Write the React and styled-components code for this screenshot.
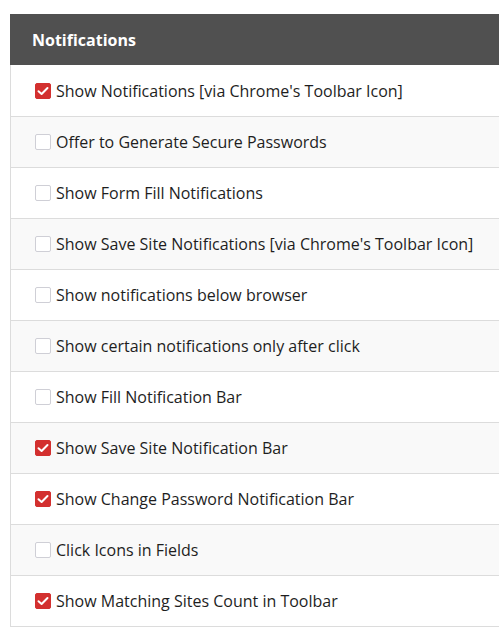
import React from 'react';
import styled, { createGlobalStyle } from 'styled-components';

const GlobalStyle = createGlobalStyle`
  html, body {
    margin: 0;
    padding: 0;
    background: #fff;
  }
  body {
    font-family: "Open Sans", "Liberation Sans", sans-serif;
  }
`

// the panel runs on to the right edge of the window, so there is no right border
const Page = styled.div`
  padding: 14px 0 0 10px;
`

const Panel = styled.section`
  border-left: 1px solid #dcdcdc;
  border-bottom: 1px solid #dcdcdc;
`

const Header = styled.header`
  height: 51px;
  margin-left: -1px;
  background: #505050;
  color: #fff;
  font-size: 16px;
  font-weight: 700;
  display: flex;
  align-items: center;
  padding-left: 22px;
`

const Row = styled.label`
  display: flex;
  align-items: center;
  height: 50px;
  padding-left: 24px;
  border-top: 1px solid #dcdcdc;
  background: ${p => (p.$striped ? '#f9f9f9' : '#fff')};
  font-size: 16px;
  color: #1e1e1e;
  white-space: nowrap;
  cursor: pointer;

  &:first-of-type {
    border-top: none;
    height: 51px;
  }
`

const Box = styled.span`
  flex: 0 0 auto;
  box-sizing: border-box;
  width: 16px;
  height: 16px;
  margin-right: 5px;
  border-radius: 2px;
  display: flex;
  align-items: center;
  justify-content: center;
  background: ${p => (p.$checked ? '#d3302f' : '#fff')};
  border: 1px solid ${p => (p.$checked ? '#d3302f' : '#cfcfd6')};
`

const items = [
  { label: "Show Notifications [via Chrome's Toolbar Icon]", checked: true },
  { label: 'Offer to Generate Secure Passwords', checked: false },
  { label: 'Show Form Fill Notifications', checked: false },
  { label: "Show Save Site Notifications [via Chrome's Toolbar Icon]", checked: false },
  { label: 'Show notifications below browser', checked: false },
  { label: 'Show certain notifications only after click', checked: false },
  { label: 'Show Fill Notification Bar', checked: false },
  { label: 'Show Save Site Notification Bar', checked: true },
  { label: 'Show Change Password Notification Bar', checked: true },
  { label: 'Click Icons in Fields', checked: false },
  { label: 'Show Matching Sites Count in Toolbar', checked: true },
]

function Check({ checked }) {
  return (
    <Box $checked={checked}>
      {checked && (
        <svg width="12" height="10" viewBox="0 0 12 10">
          <path d="M1.5 5.2 L4.6 8 L10.5 2" fill="none" stroke="#fff" strokeWidth="2" strokeLinecap="round" strokeLinejoin="round" />
        </svg>
      )}
    </Box>
  )
}

export default function App() {
  return (
    <Page>
      <GlobalStyle />
      <Panel>
        <Header>Notifications</Header>
        {items.map((item, i) => (
          <Row key={item.label} $striped={i % 2 === 1}>
            <Check checked={item.checked} />
            <span>{item.label}</span>
          </Row>
        ))}
      </Panel>
    </Page>
  )
}
